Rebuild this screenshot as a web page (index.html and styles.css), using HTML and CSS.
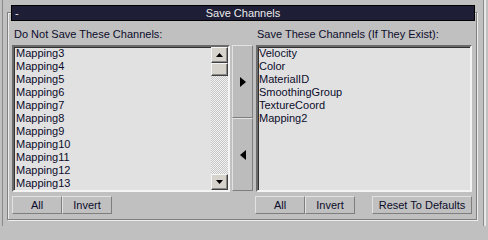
FILE: index.html
```html
<!DOCTYPE html>
<html>
<head>
<meta charset="utf-8">
<link rel="stylesheet" href="styles.css">
</head>
<body>
<div class="rollout">
  <div class="header"><span class="minus">-</span><span class="title">Save Channels</span></div>
  <div class="frame">
    <div class="cols">
      <div class="col col-left">
        <div class="label">Do Not Save These Channels:</div>
        <div class="listbox">
          <ul class="items">
            <li>Mapping3</li>
            <li>Mapping4</li>
            <li>Mapping5</li>
            <li>Mapping6</li>
            <li>Mapping7</li>
            <li>Mapping8</li>
            <li>Mapping9</li>
            <li>Mapping10</li>
            <li>Mapping11</li>
            <li>Mapping12</li>
            <li>Mapping13</li>
          </ul>
          <div class="scrollbar">
            <div class="sb-btn">
              <svg width="7" height="4" viewBox="0 0 7 4"><polygon points="0,4 7,4 3.5,0" fill="#000"/></svg>
            </div>
            <div class="sb-thumb"></div>
            <div class="sb-track"></div>
            <div class="sb-btn">
              <svg width="7" height="4" viewBox="0 0 7 4"><polygon points="0,0 7,0 3.5,4" fill="#000"/></svg>
            </div>
          </div>
        </div>
        <div class="btnrow">
          <div class="btn w50">All</div>
          <div class="btn w50">Invert</div>
        </div>
      </div>
      <div class="col col-mid">
        <div class="movebtn">
          <svg width="6" height="10" viewBox="0 0 6 10"><polygon points="0,0 6,5 0,10" fill="#000"/></svg>
        </div>
        <div class="movebtn">
          <svg width="6" height="10" viewBox="0 0 6 10"><polygon points="6,0 0,5 6,10" fill="#000"/></svg>
        </div>
      </div>
      <div class="col col-right">
        <div class="label">Save These Channels (If They Exist):</div>
        <div class="listbox listbox-right">
          <ul class="items items-right">
            <li>Velocity</li>
            <li>Color</li>
            <li>MaterialID</li>
            <li>SmoothingGroup</li>
            <li>TextureCoord</li>
            <li>Mapping2</li>
          </ul>
        </div>
        <div class="btnrow">
          <div class="btn w50">All</div>
          <div class="btn w50">Invert</div>
          <div class="btn w100 push">Reset To Defaults</div>
        </div>
      </div>
    </div>
  </div>
</div>
</body>
</html>
```

FILE: styles.css
```css
* {
  box-sizing: border-box;
}

html, body {
  margin: 0;
  padding: 0;
  background: #c0c0c0;
  font-family: "Liberation Sans", Arial, sans-serif;
  font-size: 11px;
  color: #0c0c2c;
}

body {
  height: 226px;
  overflow: hidden;
}

.rollout {
  position: relative;
  margin-left: 2px;
  width: 482px;
  height: 226px;
  padding-top: 12px;
  border-left: 1px solid #8a8a8a;
  border-right: 1px solid #8a8a8a;
  box-shadow: 2px 0 0 #e6e6e6;
}

.header {
  position: absolute;
  left: 8px;
  top: 5px;
  width: 464px;
  height: 16px;
  background: #1e1e36;
  border: 1px solid #000;
  color: #ececec;
  line-height: 14px;
  display: flex;
  align-items: center;
  justify-content: center;
  z-index: 2;
}

.minus {
  position: absolute;
  left: 3px;
  top: 0;
}

.title {
  display: block;
}

.frame {
  margin-left: 4px;
  width: 470px;
  height: 208px;
  border: 1px solid #808080;
  box-shadow: inset 1px 1px 0 #ececec, 1px 1px 0 #ececec;
  padding: 15px 0 0 4px;
}

.cols {
  display: flex;
  gap: 2px;
}

.col {
  display: flex;
  flex-direction: column;
}

.col-left {
  width: 218px;
}

.col-right {
  width: 217px;
}

.label {
  height: 13px;
  line-height: 13px;
  margin-left: 2px;
  margin-bottom: 4px;
  white-space: nowrap;
}

.listbox {
  display: flex;
  height: 147px;
  background: #e1e1e1;
  border-style: solid;
  border-width: 2px;
  border-color: #6a6a6a #f4f4f4 #f4f4f4 #6a6a6a;
  box-shadow: inset 1px 1px 0 #303030;
}

.listbox-right {
  margin-left: 1px;
  width: 216px;
}

.items {
  list-style: none;
  margin: 0;
  padding: 0 0 0 2px;
  flex: 1;
}

.items-right {
  padding-left: 1px;
}

.items li {
  height: 13px;
  line-height: 13px;
  white-space: nowrap;
}

.scrollbar {
  width: 17px;
  display: flex;
  flex-direction: column;
}

.sb-btn,
.sb-thumb {
  background: #d6d3cc;
  border-style: solid;
  border-width: 1px;
  border-color: #f4f4f4 #404040 #404040 #f4f4f4;
  box-shadow: inset -1px -1px 0 #8a8a8a;
}

.sb-btn {
  height: 16px;
  display: flex;
  align-items: center;
  justify-content: center;
}

.sb-thumb {
  height: 13px;
}

.sb-track {
  flex: 1;
  background: repeating-conic-gradient(#f2f2f2 0 25%, #c6c6c6 0 50%) 0 0 / 2px 2px;
}

.col-mid {
  width: 21px;
  margin-top: 17px;
  height: 146px;
}

.movebtn {
  height: 73px;
  background: #bcbcbc;
  border-style: solid;
  border-width: 1px;
  border-color: #e2e2e2 #7e7e7e #7e7e7e #e2e2e2;
  display: flex;
  align-items: center;
  justify-content: center;
  padding-left: 1px;
}

.btnrow {
  display: flex;
  margin-top: 4px;
  height: 18px;
}

.btn {
  height: 18px;
  line-height: 16px;
  text-align: center;
  background: #c0c0c0;
  border-style: solid;
  border-width: 1px;
  border-color: #e2e2e2 #7e7e7e #7e7e7e #e2e2e2;
  white-space: nowrap;
}

.w50 {
  width: 50px;
}

.w100 {
  width: 100px;
}

.push {
  margin-left: 17px;
}
```
